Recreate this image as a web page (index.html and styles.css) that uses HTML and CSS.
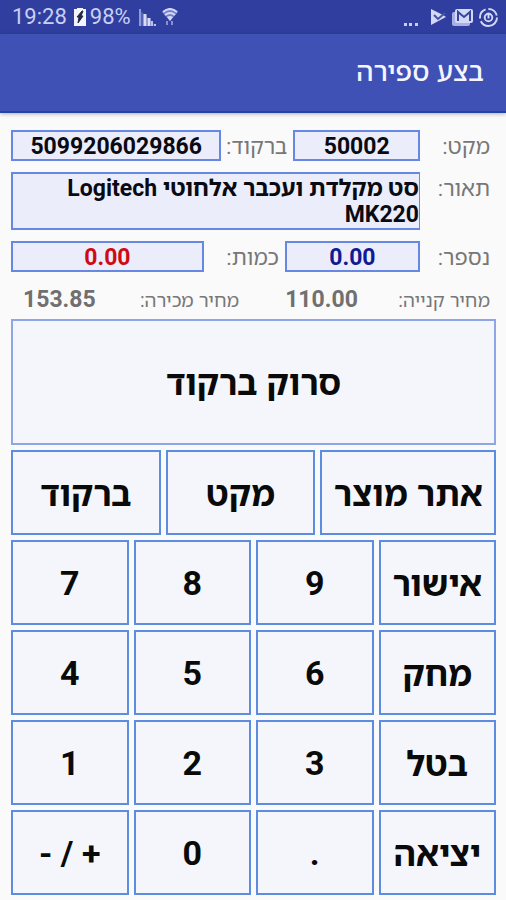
FILE: index.html
```html
<!DOCTYPE html>
<html lang="he" dir="rtl">
<head>
<meta charset="utf-8">
<meta name="viewport" content="width=device-width, initial-scale=1">
<title>בצע ספירה</title>
<link rel="stylesheet" href="styles.css">
</head>
<body>
<div class="status" dir="ltr">
  <div class="status-group">
    <span>19:28</span>
    <svg class="battery" width="12" height="18" viewBox="0 0 12 18" aria-hidden="true"><path d="M3 0h6v1h3v17H0V1h3z" fill="#f3f4ff"/><path d="M8 3 3 9h2l-1 6 5-7H7l2-5z" fill="#222840" stroke="#222840"/></svg>
    <span>98%</span>
    <svg class="signal" width="17" height="17" viewBox="0 0 17 17" aria-hidden="true"><path d="M0 0 17 17H0z" fill="#5461b4"/><path d="M1 0v17" stroke="#8e99d8" stroke-width="2"/><path d="M6 5v12M10 9v8" stroke="#d8dcf8" stroke-width="3"/><path d="M13 12v5M16 15v2" stroke="#b9c0ea" stroke-width="2"/></svg>
    <svg class="wifi" width="16" height="18" viewBox="0 0 16 18" aria-hidden="true"><path d="M0 4Q8-3 16 4L8 13z" fill="#7480c6"/><g fill="none" stroke="#d3d8f7" stroke-width="2"><path d="M1 4Q8-2 15 4M3 7q5-4 10 0"/></g><path d="M5 9q3-2 6 0l-3 4z" fill="#d3d8f7"/><path d="M5 13v4M10 13v4" stroke="#8792d2" stroke-width="2"/></svg>
  </div>
  <div class="status-group status-end">
    <svg class="more" width="16" height="5" viewBox="0 0 16 5" aria-hidden="true"><path d="M1 1h3v3H1zM6 1h3v3H6zM12 1h3v3h-3z" fill="#c9cff4"/></svg>
    <svg width="15" height="16" viewBox="0 0 15 16" aria-hidden="true"><path d="M0 0 10 5l2 1 3 2L0 16z" fill="#d3d8f7"/><path d="m3 6 4 4 7-6" fill="none" stroke="#4452a8" stroke-width="2"/></svg>
    <svg width="21" height="18" viewBox="0 0 21 18" aria-hidden="true"><rect x="0" y="4" width="18" height="14" rx="2" fill="#a8b1e4"/><rect x="3" y="1" width="18" height="14" rx="2" fill="#d3d8f7"/><path d="M6 13V4l6 5 6-5v9" fill="none" stroke="#36459f" stroke-width="2"/></svg>
    <svg width="19" height="19" viewBox="0 0 20 20" aria-hidden="true"><g fill="none" stroke="#d3d8f7" stroke-width="2"><circle cx="10" cy="10" r="9" stroke-dasharray="24 3 12 3 12 3"/><circle cx="10" cy="10" r="4"/><path d="M10 5v6"/></g></svg>
  </div>
</div>
<header class="appbar"><h1>בצע ספירה</h1></header>
<main>
  <form class="details">
    <div class="row row-codes">
      <label for="sku">מקט:</label>
      <input id="sku" value="50002" readonly>
      <label for="barcode">ברקוד:</label>
      <input id="barcode" value="5099206029866" readonly>
    </div>
    <div class="row row-description">
      <label for="description">תאור:</label>
      <textarea id="description" rows="2" readonly>סט מקלדת ועכבר אלחוטי Logitech MK220</textarea>
    </div>
    <div class="row row-counts">
      <label for="counted">נספר:</label>
      <input id="counted" class="counted" value="0.00" readonly>
      <label for="quantity">כמות:</label>
      <input id="quantity" class="quantity" value="0.00" readonly>
    </div>
    <dl class="prices">
      <dt>מחיר קנייה:</dt><dd>110.00</dd>
      <dt>מחיר מכירה:</dt><dd class="sale">153.85</dd>
    </dl>
  </form>
  <div class="pad">
    <button class="scan" type="button">סרוק ברקוד</button>
    <div class="modes">
      <button type="button">אתר מוצר</button>
      <button type="button">מקט</button>
      <button type="button">ברקוד</button>
    </div>
    <div class="keys">
      <button type="button">אישור</button>
      <button class="digit" type="button">9</button>
      <button class="digit" type="button">8</button>
      <button class="digit" type="button">7</button>
      <button type="button">מחק</button>
      <button class="digit" type="button">6</button>
      <button class="digit" type="button">5</button>
      <button class="digit" type="button">4</button>
      <button type="button">בטל</button>
      <button class="digit" type="button">3</button>
      <button class="digit" type="button">2</button>
      <button class="digit" type="button">1</button>
      <button type="button">יציאה</button>
      <button class="digit" type="button">.</button>
      <button class="digit" type="button">0</button>
      <button class="digit" type="button"><span dir="ltr">- / +</span></button>
    </div>
  </div>
</main>
</body>
</html>
```
FILE: styles.css
```css
* {
  box-sizing: border-box;
}

body {
  margin: 0;
  background: #fafafa;
  color: #0a0a0a;
  font-family: "Noto Sans Hebrew", "Noto Sans";
}

.status {
  display: flex;
  justify-content: space-between;
  align-items: center;
  height: 34px;
  padding: 0 8px 0 12px;
  background: #303f9f;
  color: #c9cff4;
  font-family: Roboto, sans-serif;
  font-size: 22px;
  line-height: 34px;
}

.status-group {
  display: flex;
  align-items: center;
}

.battery {
  margin: 0 4px 0 7px;
}

.signal {
  margin: 0 6px 0 8px;
}

.status-end {
  gap: 6px;
}

.more {
  align-self: flex-end;
  margin: 0 6px 0 0;
}

.appbar {
  display: flex;
  align-items: center;
  height: 79px;
  padding: 0 22px 3px;
  background: #3f51b5;
  border-bottom: 2px solid #2443a8;
  box-shadow: 0 1px 4px rgba(0, 0, 0, 0.3);
}

h1 {
  margin: 0;
  color: #f4f5ff;
  font-size: 27px;
  font-weight: 500;
  line-height: 40px;
}

main {
  padding: 17px 10px 5px 11px;
}

.row {
  display: grid;
  align-items: start;
  margin-bottom: 11px;
}

.row-codes {
  grid-template-columns: 76px 127fr 72px 211fr;
}

.row-description {
  grid-template-columns: 76px 1fr;
}

.row-counts {
  grid-template-columns: 76px 136fr 81px 194fr;
}

label,
dt {
  padding-right: 6px;
  color: #777;
  font-size: 22px;
  line-height: 31px;
  white-space: nowrap;
}

input,
textarea {
  display: block;
  width: 100%;
  margin: 0;
  padding: 2px 0 0;
  border: 2px solid #6688e4;
  border-radius: 0;
  background: #ebedfa;
  color: #0a0a12;
  font-family: Roboto, "Noto Sans Hebrew", "Noto Sans";
  font-size: 23px;
  font-weight: 700;
  outline: none;
}

input {
  height: 31px;
  text-align: center;
}

textarea {
  height: 58px;
  border-right-width: 1px;
  line-height: 26px;
  overflow: hidden;
  resize: none;
}

.counted {
  color: #101a94;
}

.quantity {
  color: #d00a14;
}

.prices {
  display: grid;
  grid-template-columns: 98px 153fr 107px 127fr;
  margin: 0 0 2px;
}

.prices dt {
  font-size: 19px;
  line-height: 34px;
}

.prices dd {
  margin: 0;
  color: #707070;
  font-family: Roboto, sans-serif;
  font-size: 23px;
  font-weight: 700;
  line-height: 34px;
  text-align: center;
}

.prices .sale {
  padding-left: 12px;
  text-align: left;
}

.pad {
  display: grid;
  gap: 5px;
}

.modes {
  display: grid;
  grid-template-columns: 176fr 150fr 150fr;
  gap: 5px;
}

.keys {
  display: grid;
  grid-template-columns: repeat(4, 1fr);
  gap: 5px;
}

button {
  min-width: 0;
  height: 85px;
  padding: 0;
  border: 2px solid #5c8de0;
  background: #f4f6fb;
  color: #0a0a0a;
  font-family: inherit;
  font-size: 34px;
  font-weight: 700;
  white-space: nowrap;
}

.digit {
  font-family: Roboto, sans-serif;
}

.scan {
  height: 126px;
  border-color: #8ea6e6;
}
```
